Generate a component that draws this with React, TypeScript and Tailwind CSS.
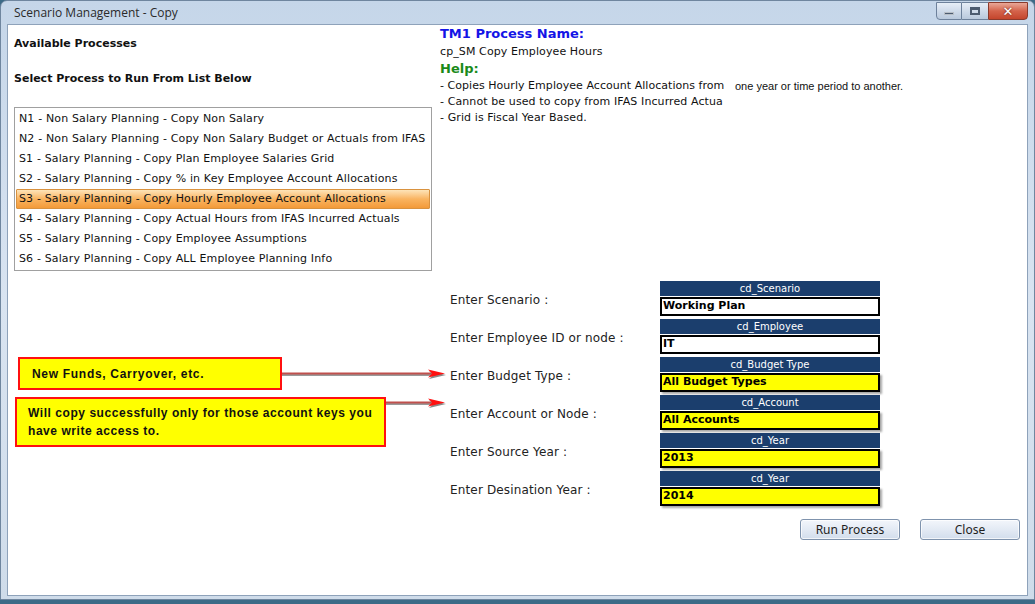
import React from "react";

const processes = [
  "N1 - Non Salary Planning - Copy Non Salary",
  "N2 - Non Salary Planning - Copy Non Salary Budget or Actuals from IFAS",
  "S1 - Salary Planning - Copy Plan Employee Salaries Grid",
  "S2 - Salary Planning - Copy % in Key Employee Account Allocations",
  "S3 - Salary Planning - Copy Hourly Employee Account Allocations",
  "S4 - Salary Planning - Copy Actual Hours from IFAS Incurred Actuals",
  "S5 - Salary Planning - Copy Employee Assumptions",
  "S6 - Salary Planning - Copy ALL Employee Planning Info",
];

type Field = { label: string; dim: string; value: string; yellow: boolean };

const fields: Field[] = [
  { label: "Enter Scenario :", dim: "cd_Scenario", value: "Working Plan", yellow: false },
  { label: "Enter Employee ID or node :", dim: "cd_Employee", value: "IT", yellow: false },
  { label: "Enter Budget Type :", dim: "cd_Budget Type", value: "All Budget Types", yellow: true },
  { label: "Enter Account or Node :", dim: "cd_Account", value: "All Accounts", yellow: true },
  { label: "Enter Source Year :", dim: "cd_Year", value: "2013", yellow: true },
  { label: "Enter Desination Year :", dim: "cd_Year", value: "2014", yellow: true },
];

const verdana = "font-['DejaVu_Sans',Verdana,sans-serif]";

function Arrow({ width }: { width: number }) {
  return (
    <svg width={width} height="12" viewBox={`0 0 ${width} 12`} className="block">
      <line x1="0" y1="7" x2={width - 14} y2="7" stroke="#9a9a9a" strokeWidth="2" />
      <line x1="0" y1="5.5" x2={width - 14} y2="5.5" stroke="#c0504d" strokeWidth="2" />
      <polygon points={`${width - 17},3 ${width},7 ${width - 17},11 ${width - 13},7`} fill="#8a8a8a" />
      <polygon points={`${width - 18},1.5 ${width - 1},5.5 ${width - 18},9.5 ${width - 14},5.5`} fill="#ff1010" />
    </svg>
  );
}

function WinButton({ label }: { label: string }) {
  return (
    <button className="w-[100px] h-[21px] rounded-[3px] border border-[#7f93ad] bg-gradient-to-b from-[#f3f6fb] via-[#e3eaf4] to-[#d2ddec] text-[12px] text-[#1e1e1e] font-['Noto_Sans',sans-serif] leading-none shadow-[inset_0_0_0_1px_rgba(255,255,255,0.7)]">
      {label}
    </button>
  );
}

export default function App() {
  return (
    <div className="w-[1035px] h-[604px] bg-[#3c6b87] overflow-hidden">
      <div className="h-[600px] flex flex-col rounded-t-[7px] border border-[#6f869f] bg-gradient-to-b from-[#c5d6e9] via-[#d9e4f1] to-[#cfdcea]">
        {/* title bar */}
        <div className="h-[23px] flex items-start justify-between shrink-0">
          <div className="pl-[13px] pt-[4px] text-[12px] text-[#2a2a2a] font-['Open_Sans',sans-serif] leading-[15px]">
            Scenario Management - Copy
          </div>
          <div className="flex mr-[6px] mt-[1px] h-[18px]">
            <div className="w-[26px] rounded-bl-[4px] border border-[#6d819b] bg-gradient-to-b from-[#e6eef7] via-[#cfdbea] to-[#b9c9dc] flex items-end justify-center pb-[4px]">
              <div className="w-[10px] h-[3px] bg-[#4c5c70] border border-white/60" />
            </div>
            <div className="w-[26px] border-y border-[#6d819b] bg-gradient-to-b from-[#e6eef7] via-[#cfdbea] to-[#b9c9dc] flex items-center justify-center">
              <div className="w-[10px] h-[8px] border-[2px] border-[#4c5c70] border-t-[3px]" />
            </div>
            <div className="w-[40px] rounded-br-[4px] border border-[#8a3a2c] bg-gradient-to-b from-[#e8a798] via-[#d4634b] to-[#c4452c] flex items-center justify-center">
              <span className="text-white font-bold text-[13px] leading-none font-['DejaVu_Sans',sans-serif] [text-shadow:0_0_2px_#5a1a10]">
                ✕
              </span>
            </div>
          </div>
        </div>

        {/* client area */}
        <div className={`flex-1 mx-[6px] mb-[3px] border border-[#8ea2ba] bg-white flex flex-col text-[#111] ${verdana}`}>
          {/* top section */}
          <div className="flex h-[256px]">
            <div className="w-[426px] pl-[6px] pt-[12px]">
              <div className="text-[11px] font-bold leading-[14px]">Available Processes</div>
              <div className="text-[11px] font-bold leading-[14px] mt-[21px]">Select Process to Run From List Below</div>
              <div className="mt-[21px] w-[418px] h-[164px] border border-[#a0a0a0] pt-[1px] px-[1px]">
                {processes.map((p, idx) => (
                  <div
                    key={idx}
                    className={
                      "h-[20px] flex items-center px-[2px] text-[11px] tracking-[0.14px] whitespace-nowrap " +
                      (idx === 4
                        ? "bg-gradient-to-b from-[#fde4b8] via-[#f9b460] to-[#f39a38] border border-[#d9923f] rounded-[1px]"
                        : "border border-transparent")
                    }
                  >
                    {p}
                  </div>
                ))}
              </div>
            </div>
            <div className="pl-[6px] pt-[1px]">
              <div className="text-[13px] font-bold text-[#1414e6] leading-[16px]">TM1 Process Name:</div>
              <div className="text-[11px] leading-[19px] tracking-[0.1px]">cp_SM Copy Employee Hours</div>
              <div className="text-[13px] font-bold text-[#1a8a1a] leading-[16px]">Help:</div>
              <div className="flex items-center h-[17px] mt-[1px]">
                <div className="w-[284px] overflow-hidden whitespace-nowrap text-[11px] tracking-[0.04px]">
                  - Copies Hourly Employee Account Allocations from
                </div>
                <span className="ml-[11px] text-[11px] font-['Liberation_Sans',Arial,sans-serif]">
                  one year or time period to another.
                </span>
              </div>
              <div className="w-[283px] h-[15px] flex items-center overflow-hidden whitespace-nowrap text-[11px] tracking-[0.1px]">
                - Cannot be used to copy from IFAS Incurred Actuals
              </div>
              <div className="h-[16px] flex items-center whitespace-nowrap text-[11px] tracking-[0.1px]">- Grid is Fiscal Year Based.</div>
            </div>
          </div>

          {/* form section */}
          <div className="flex">
            <div className="w-[442px] pt-[76px]">
              <div className="flex items-center">
                <div className="ml-[10px] w-[264px] h-[33px] border-2 border-[#ff1010] bg-[#ffff00] flex items-center pl-[12px] text-[12px] font-bold tracking-[0.7px] font-['Liberation_Sans',Arial,sans-serif]">
                  New Funds, Carryover, etc.
                </div>
                <Arrow width={164} />
              </div>
              <div className="flex items-start mt-[7px]">
                <div className="ml-[7px] w-[371px] h-[50px] border-2 border-[#ff1010] bg-[#ffff00] pl-[11px] pt-[5px] text-[12px] font-bold leading-[18px] tracking-[0.55px] font-['Liberation_Sans',Arial,sans-serif]">
                  Will copy successfully only for those account keys you
                  <br />
                  have write access to.
                </div>
                <Arrow width={60} />
              </div>
            </div>
            <div className="w-[210px]">
              {fields.map((f, idx) => (
                <div key={idx} className="h-[38px] flex items-center text-[12px] tracking-[0.15px] text-[#222]">
                  {f.label}
                </div>
              ))}
            </div>
            <div className="w-[220px]">
              {fields.map((f, idx) => (
                <div key={idx} className="h-[38px]">
                  <div className="h-[15px] bg-[#1b3e6d] text-white text-[10px] leading-[15px] text-center">{f.dim}</div>
                  <div
                    className={
                      "mt-[1px] h-[19px] border-2 border-black px-[1px] flex items-center text-[11px] font-bold text-black " +
                      (f.yellow ? "bg-[#ffff00] shadow-[2px_2px_2px_rgba(0,0,0,0.35)]" : "bg-white")
                    }
                  >
                    {f.value}
                  </div>
                </div>
              ))}
            </div>
          </div>

          <div className="flex justify-end gap-[20px] pr-[7px] mt-[10px]">
            <WinButton label="Run Process" />
            <WinButton label="Close" />
          </div>
        </div>
      </div>
    </div>
  );
}
